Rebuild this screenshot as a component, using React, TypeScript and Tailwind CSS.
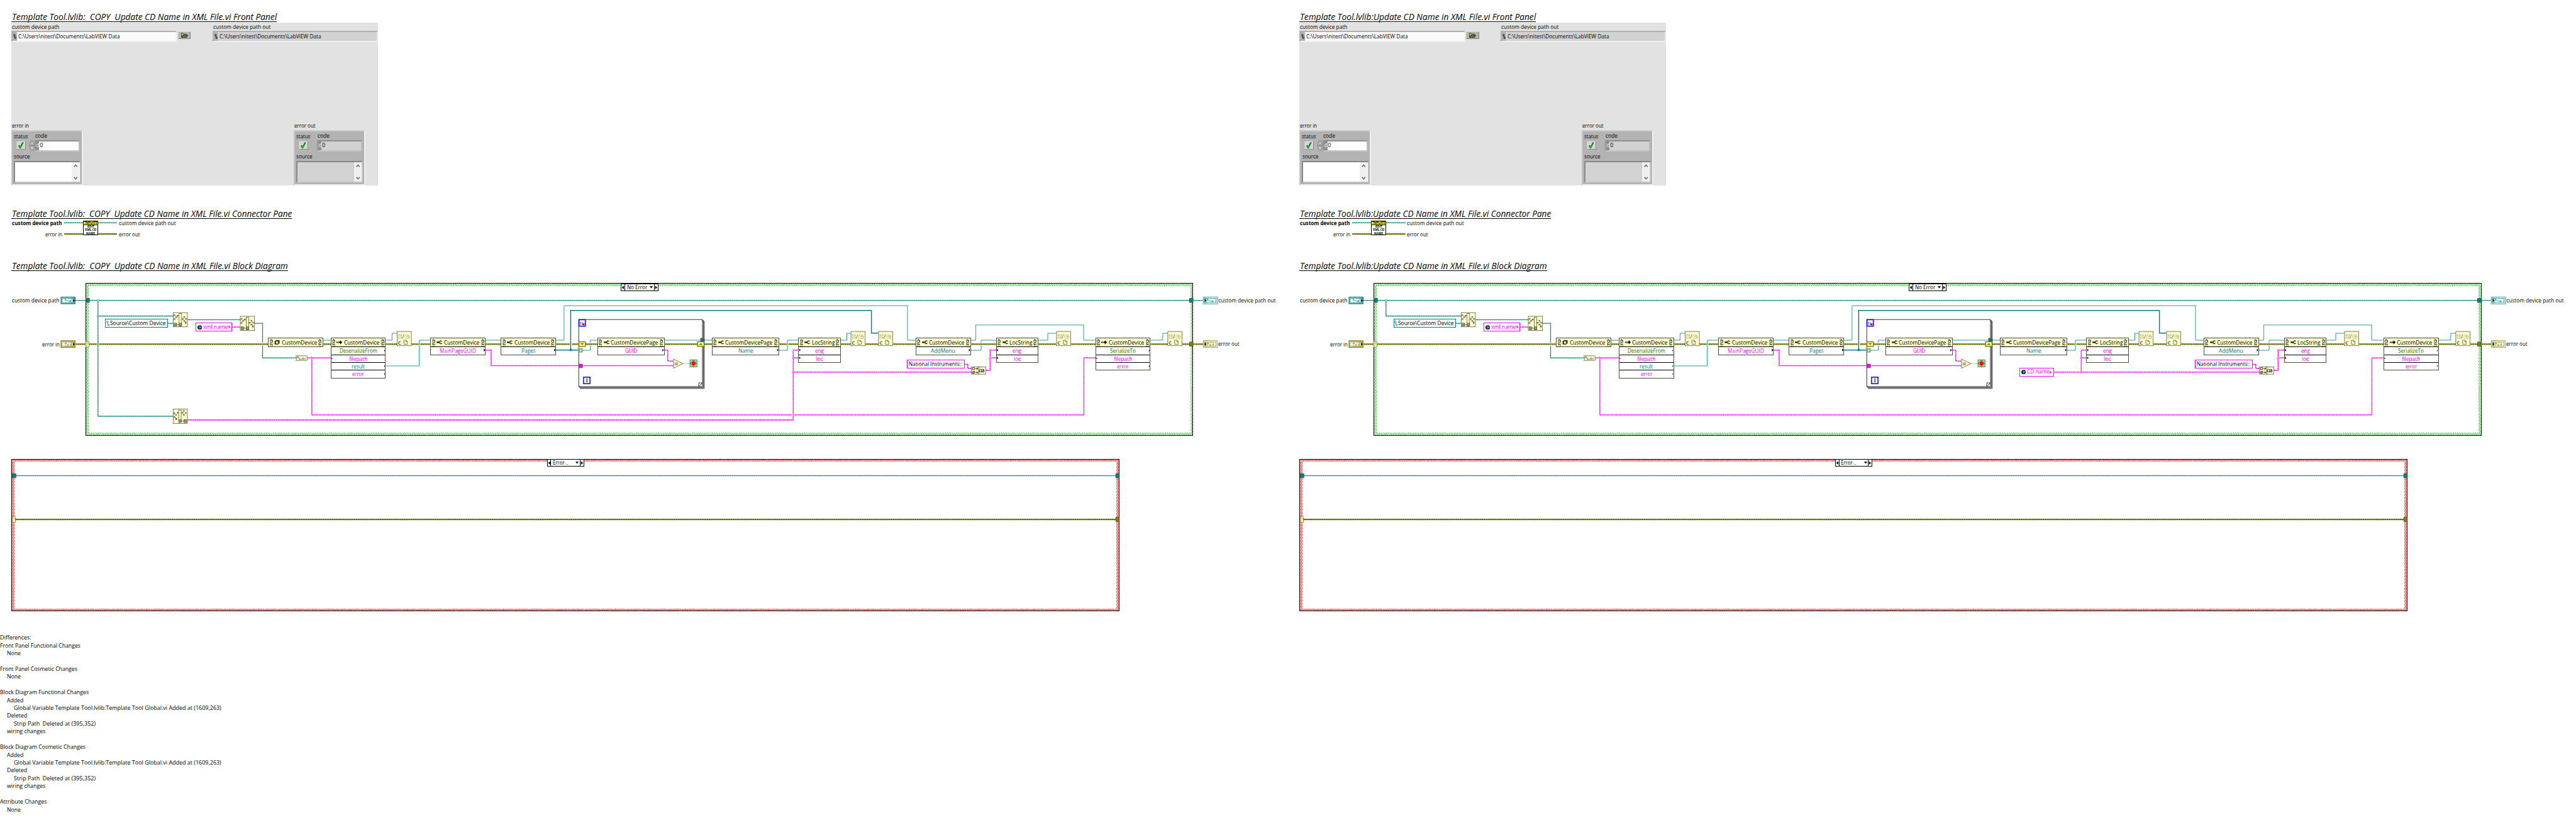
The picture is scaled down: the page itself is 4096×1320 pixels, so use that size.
import React, { useLayoutEffect, useRef } from "react";

const TEAL = "#008080";
const PINK = "#ff00ff";
const OLIVE = "#808000";
const CREAM = "#ffffcc";
const EDGE = "#4d4d3d";

/* Text squeezed or stretched horizontally to an exact width. */
function Fit({ w, className = "", children }: { w: number; className?: string; children: string }) {
  const outer = useRef<HTMLSpanElement>(null);
  const inner = useRef<HTMLSpanElement>(null);
  useLayoutEffect(() => {
    if (!outer.current || !inner.current) return;
    inner.current.style.transform = "none";
    const a = outer.current.getBoundingClientRect().width;
    const b = inner.current.getBoundingClientRect().width;
    if (b > 0) inner.current.style.transform = `scaleX(${a / b})`;
  }, [w, children]);
  return (
    <span ref={outer} className={`block shrink-0 ${className}`} style={{ width: w }}>
      <span ref={inner} className="inline-block origin-left whitespace-pre">
        {children}
      </span>
    </span>
  );
}

function Label({ x, y, w, className = "", children }: { x: number; y: number; w: number; className?: string; children: string }) {
  return (
    <div className={`absolute h-4 text-[13px] leading-4 ${className}`} style={{ left: x, top: y - 8 }}>
      <Fit w={w}>{children}</Fit>
    </div>
  );
}

function Heading({ w, className, children }: { w: number; className: string; children: string }) {
  return (
    <h2 className={`ml-[25px] h-[19px] w-max border-b-2 border-black pl-px text-[19.500px] italic leading-[17px] ${className}`}>
      <Fit w={w}>{children}</Fit>
    </h2>
  );
}

/* ---------- Front panel ---------- */

function PathField({ out = false }: { out?: boolean }) {
  return (
    <div className={`flex h-[25px] w-[360px] border-[3px] border-t-[#b0b0b0] border-l-[#b0b0b0] border-b-[#f0f0f0] ${out ? "border-r-[#e8e8e8]" : "border-r-[#f0f0f0]"}`}>
      <div className="flex w-[9px] items-center justify-center bg-[#b4b4b4]">
        <svg width="7" height="11" viewBox="0 0 7 11" fill="none" stroke="#000" strokeWidth="1">
          <path d="M1 1h3v3H1zM3 4v5M3.500 6.500h2.500v3.500H3.500z" />
        </svg>
      </div>
      <div className={`flex flex-1 items-center pl-[3px] text-[13px] leading-4 ${out ? "bg-[#d2d2d2]" : "bg-[#fafafa]"}`}>
        <Fit w={221}>{"C:\\Users\\nitest\\Documents\\LabVIEW Data"}</Fit>
      </div>
    </div>
  );
}

function ErrorCluster({ out = false }: { out?: boolean }) {
  const fill = out ? "bg-[#d2d2d2]" : "bg-white";
  return (
    <div className="h-[121px] w-[155px] border-[3px] border-t-[#cbcbcb] border-l-[#c4c4c4] border-r-[#efefef] border-b-[#efefef] bg-[#b3b3b3] pl-[2px] pt-[3px] text-[13px] leading-4">
      <div className="flex h-4">
        <Fit w={31}>status</Fit>
        <Fit w={26} className="ml-4 -mt-px">code</Fit>
      </div>
      <div className="flex h-[25px]">
        <div className="ml-[6px] mt-px flex h-5 w-5 items-center justify-center border-2 border-b-[#8c8c8c] border-r-[#8c8c8c] border-l-[#c8c8c8] border-t-[#c8c8c8] bg-[#d6d6d6]">
          <svg width="12" height="14" viewBox="0 0 12 14">
            <path d="M1 8l2-1 2 2 4-8h2l-4 8-2 4H3z" fill="#00ee00" stroke="#003300" strokeWidth="1" />
          </svg>
        </div>
        <div className="w-[9px]" />
        {out ? (
          <div className="w-[11px]" />
        ) : (
          <svg width="11" height="24" viewBox="0 0 11 24">
            <ellipse cx="5.500" cy="12" rx="5.300" ry="11.500" fill="#a8a8a8" stroke="#7a7a7a" strokeWidth="0.800" />
            <path d="M0 12h11" stroke="#6e6e6e" />
            <path d="M3.500 8.500L5.500 5l2 3.500M3.500 15.500h4L5.500 19z" fill="none" stroke="#f4f4f4" />
          </svg>
        )}
        <div className="flex h-[25px] w-[98px] border-[3px] border-t-[#8f8f8f] border-l-[#9a9a9a] border-r-[#bdbdbd] border-b-[#c4c4c4]">
          <div className="w-[7px] bg-[#8e8e8e] text-right text-[12px] leading-[18px] text-[#eeeeee]">d</div>
          <div className={`flex-1 pl-px text-[12px] leading-[18px] ${fill}`}>0</div>
        </div>
      </div>
      <Fit w={35} className="mt-[2px] pl-px">source</Fit>
      <div className="mt-[2px] flex h-[49px] w-[146px] border-[4px] border-t-[#868686] border-l-[#8a8a8a] border-r-[#bdbdbd] border-b-[#c0c0c0]">
        <div className={`flex-1 ${fill}`} />
        <div className="flex w-4 flex-col items-center justify-between bg-[#f0f0f0] py-1">
          <svg width="9" height="7" viewBox="0 0 9 7" fill="none" stroke="#606060" strokeWidth="2"><path d="M1 6l3.500-4L8 6" /></svg>
          <svg width="9" height="7" viewBox="0 0 9 7" fill="none" stroke="#606060" strokeWidth="2"><path d="M1 1l3.500 4L8 1" /></svg>
        </div>
        <div className={`w-px ${fill}`} />
      </div>
    </div>
  );
}

function FrontPanel() {
  return (
    <section className="ml-[25px] mt-px flex h-[355px] w-[797px] flex-col justify-between overflow-hidden bg-[#e2e2e2] text-[13px] leading-4">
      <div className="flex pt-px">
        <div className="w-[362px]">
          <Fit w={103} className="ml-[1.500px] mb-px">custom device path</Fit>
          <PathField />
        </div>
        <div className="mt-[18px] flex h-[17px] w-7 items-center justify-center border-2 border-t-[#d0d0d0] border-l-[#c8c8c8] border-r-[#808080] border-b-[#808080] bg-[#b4b4b4]">
          <svg width="15" height="11" viewBox="0 0 15 11">
            <path d="M1 10V1h3l1 2h6v2" fill="#ffff33" stroke="#000" />
            <path d="M1 10.500L3.500 5H14l-2 5.500z" fill="#6b6b4a" stroke="#000" />
          </svg>
        </div>
        <div className="ml-[47px] w-[360px] shrink-0">
          <Fit w={125} className="ml-px mb-px">custom device path out</Fit>
          <PathField out />
        </div>
      </div>
      <div className="flex items-end justify-between pr-[28px]">
        <div>
          <Fit w={37} className="ml-[1.500px] mb-[2px]">error in</Fit>
          <ErrorCluster />
        </div>
        <div>
          <Fit w={46} className="ml-px mb-[2px]">error out</Fit>
          <ErrorCluster out />
        </div>
      </div>
    </section>
  );
}

/* ---------- Wires ---------- */

function Zig({ d, c }: { d: string; c: string }) {
  return (
    <g fill="none" stroke={c}>
      <path d={d} strokeWidth="1.100" />
      <path d={d} strokeWidth="2.100" strokeDasharray="2 2" />
    </g>
  );
}

function Thin({ d }: { d: string }) {
  return <path d={d} fill="none" stroke={TEAL} strokeWidth="1.100" />;
}

function Err({ d }: { d: string }) {
  return (
    <g fill="none">
      <path d={d} stroke={OLIVE} strokeWidth="3" />
      <path d={d} stroke="#000" strokeWidth="1.200" />
      <path d={d} stroke="#ffff00" strokeWidth="1.200" strokeDasharray="2 2" />
    </g>
  );
}

function Dot({ x, y, c }: { x: number; y: number; c: string }) {
  return <path d={`M${x - 2.3} ${y}L${x} ${y - 2.3}L${x + 2.3} ${y}L${x} ${y + 2.3}z`} fill="#fff" stroke={c} strokeWidth="1.200" />;
}

/* ---------- Connector pane ---------- */

function ConnectorPane() {
  return (
    <section className="ml-[26px] mt-[4px] flex h-[34px] text-[13px] leading-4">
      <div className="flex w-[113px] flex-col gap-2">
        <Fit w={109} className="-mt-[2px] font-bold">custom device path</Fit>
        <Fit w={37} className="ml-[72px]">error in</Fit>
      </div>
      <div className="flex h-8">
        <svg width="42" height="32" viewBox="0 0 42 32"><Zig d="M0 4.500H42" c={TEAL} /><Err d="M0 29H42" /></svg>
        <div className="flex h-8 w-8 flex-col border border-black bg-white text-center text-[7px] font-bold leading-[7px]">
          <div className="flex h-[8.500px] justify-center border-b border-black bg-[#ffff00]"><Fit w={28}>TMPLATE</Fit></div>
          <div className="flex flex-col items-center gap-[0.200px]">
            <Fit w={15}>EDIT</Fit>
            <Fit w={25}>XML CD</Fit>
            <Fit w={19}>NAME</Fit>
          </div>
        </div>
        <svg width="42" height="32" viewBox="0 0 42 32"><Zig d="M0 4.500H42" c={TEAL} /><Err d="M0 29H42" /></svg>
      </div>
      <div className="ml-[4px] flex flex-col gap-2">
        <Fit w={124} className="-mt-[2px]">custom device path out</Fit>
        <Fit w={46}>error out</Fit>
      </div>
    </section>
  );
}

/* ---------- Block diagram nodes ---------- */

type Row = { t: string; w: number; c: string };
type NodeSpec = { x: number; w: number; title: string; tw: number; icon: "cube" | "invoke" | "prop"; rows: Row[] };

const green = "text-[#008000]";
const pink = "text-[#ff00ff]";
const teal = "text-[#008080]";

const nodes: NodeSpec[] = [
  { x: 583, w: 120, title: "CustomDevice", tw: 77, icon: "cube", rows: [] },
  {
    x: 719, w: 120, title: "CustomDevice", tw: 77, icon: "invoke",
    rows: [
      { t: "DeserializeFrom", w: 82, c: green },
      { t: "filepath", w: 40, c: pink },
      { t: "result", w: 29, c: teal },
      { t: "error", w: 25, c: pink },
    ],
  },
  { x: 936, w: 120, title: "CustomDevice", tw: 77, icon: "prop", rows: [{ t: "MainPageGUID", w: 79, c: pink }] },
  { x: 1089, w: 120, title: "CustomDevice", tw: 77, icon: "prop", rows: [{ t: "Pages", w: 31, c: teal }] },
  { x: 1299, w: 146, title: "CustomDevicePage", tw: 103, icon: "prop", rows: [{ t: "GUID", w: 26, c: pink }] },
  { x: 1548, w: 146, title: "CustomDevicePage", tw: 103, icon: "prop", rows: [{ t: "Name", w: 32, c: teal }] },
  { x: 1736, w: 92, title: "LocString", tw: 50, icon: "prop", rows: [{ t: "eng", w: 19, c: pink }, { t: "loc", w: 16, c: pink }] },
  { x: 1991, w: 120, title: "CustomDevice", tw: 77, icon: "prop", rows: [{ t: "AddMenu", w: 53, c: teal }] },
  { x: 2166, w: 92, title: "LocString", tw: 50, icon: "prop", rows: [{ t: "eng", w: 19, c: pink }, { t: "loc", w: 16, c: pink }] },
  {
    x: 2382, w: 120, title: "CustomDevice", tw: 77, icon: "invoke",
    rows: [
      { t: "SerializeTo", w: 56, c: green },
      { t: "filepath", w: 40, c: pink },
      { t: "error", w: 25, c: pink },
    ],
  },
];

function RefMarks() {
  return (
    <svg width="7" height="17" viewBox="0 0 7 17" className="shrink-0">
      <path d="M1.500 1.500H4L6 3.500V7.500H1.500zM4 1.500V4H6" fill="none" stroke="#000" />
      <path d="M0.500 11.500V10.500H3V12.500H2V14M5.500 10V14.200" fill="none" stroke="#000" strokeWidth="1.200" />
      <path d="M1.400 15H2.600V16.200H1.400zM4.900 15H6.100V16.200H4.900z" />
    </svg>
  );
}

function NodeIcon({ kind }: { kind: NodeSpec["icon"] }) {
  return (
    <svg width="13" height="12" viewBox="0 0 13 12" className="shrink-0">
      {kind === "cube" && (
        <>
          <path d="M1 3.500L4 1.500H11.500V8L9 10.500H1z" fill="#000" />
          <path d="M3.500 4.500H8V9H3.500z" fill={CREAM} />
          <path d="M2 3.500H9L11 2M9 4V10" fill="none" stroke={CREAM} strokeWidth="0.700" />
        </>
      )}
      {kind === "invoke" && <path d="M0 4.500H1.500V7.500H0zM2.500 4.500H4V7.500H2.500zM5 4.500H8V1.500L12.500 6L8 10.500V7.500H5z" fill="#000" />}
      {kind === "prop" && (
        <>
          <path d="M0.500 4.500H6V7.500H0.500z" fill="#000" />
          <path d="M12 3.500H10.500L9 2.500L7 4V8L9 9.500L10.500 8.500H12" fill="none" stroke="#000" strokeWidth="1.500" />
        </>
      )}
    </svg>
  );
}

function DiagramNode({ n }: { n: NodeSpec }) {
  return (
    <div className="absolute top-[135px] border border-[#4d4d3d] bg-white text-[13px]" style={{ left: n.x, width: n.w }}>
      <div className="flex h-[17.500px] items-center bg-[#ffffcc] pl-[2px] leading-[17px]">
        <RefMarks />
        <div className="ml-[3px] flex w-[16px]"><NodeIcon kind={n.icon} /></div>
        <Fit w={n.tw}>{n.title}</Fit>
        <div className="ml-auto mr-[2px] flex"><RefMarks /></div>
      </div>
      {n.rows.map((r, i) => (
        <div key={i} className={`flex h-[17px] justify-center border-t border-black leading-4 ${r.c}`}>
          <Fit w={r.w}>{r.t}</Fit>
        </div>
      ))}
    </div>
  );
}

/* ---------- Diagram glyphs ---------- */

function BuildPath({ x, y, strip = false }: { x: number; y: number; strip?: boolean }) {
  return (
    <g transform={`translate(${x} ${y})`} fill="none" stroke={EDGE}>
      <rect x="0.500" y="0.500" width="31" height="31" fill={CREAM} />
      <rect x={strip ? 12.5 : 13.5} y="2.500" width="5.500" height={strip ? 21 : 27} fill={CREAM} />
      {strip ? (
        <>
          <path d="M2 8.500h2.500v2.500H2zM6 12h2v2H6zM2 16.500h2.500v2.500H2zM4.500 17L7 20.500M22.500 3h2.500v2.500h-2.500zM26.500 7.500h2.500v2.500h-2.500zM22.500 11.500h2.500v2.500h-2.500z" />
          <path d="M6 20.500h2.500v2.500H6z" fill={EDGE} />
          <path d="M8 8.500h4M18.500 8.500h4" />
          <path d="M9.500 6l3 2.500-3 2.500zM20 6l3 2.500-3 2.500z" fill={EDGE} stroke="none" />
          <rect x="12.500" y="23.500" width="6" height="6" fill="#99997a" />
          <rect x="24" y="23.500" width="6" height="6" fill="#99997a" />
          <path d="M18.500 26.500h5" />
        </>
      ) : (
        <>
          <path d="M2 5h2.500v2.500H2zM6 9h2.500v2.500H6zM2 13.500h2.500V16H2zM4.500 13L6 11.500" />
          <path d="M8 7.500h4M19 14.500h4" />
          <path d="M9.500 5l3 2.500-3 2.500zM20.500 12l3 2.500-3 2.500z" fill={EDGE} stroke="none" />
          <path d="M23.500 9h2.500v2.500h-2.500zM27 13h2.500v2.500H27zM23.500 17.500h2.500V20h-2.500zM26 19l2 2" />
          <path d="M27 21.500h2V24h-2z" fill={EDGE} />
          <rect x="2.500" y="23.500" width="6" height="6" fill="#99997a" />
          <rect x="13.500" y="23.500" width="5" height="6" fill="#99997a" />
          <path d="M8.500 26.500h5" />
        </>
      )}
    </g>
  );
}

function CloseRef({ x }: { x: number }) {
  return (
    <g transform={`translate(${x} 720)`}>
      <rect x="0.500" y="0.500" width="31" height="31" fill={CREAM} stroke={EDGE} />
      <path d="M3 7.500h8M3 15.500h8M3.500 8v7M10.500 8v7M5 10h4M6 13h4M18 8.500h8M17.500 10v4M19 15.500h9M20 12h8M22 10h6M24 14h5" stroke={EDGE} strokeWidth="0.800" strokeDasharray="1.300 1" fill="none" />
      <path d="M12 16L15.500 7" stroke={EDGE} fill="none" />
      <text x="2.500" y="29" fontSize="10" fontWeight="700" fill={EDGE}>C</text>
      <path d="M15.500 19.500H20L23 22.500V28.500H15.500zM20 19.500V22.500H23" stroke={EDGE} fill={CREAM} />
    </g>
  );
}

function Terminal({ x, y, c, out = false, err = false }: { x: number; y: number; c: string; out?: boolean; err?: boolean }) {
  const bw = out ? 1 : 2;
  return (
    <g transform={`translate(${x} ${y})`}>
      <rect x={bw / 2} y={bw / 2} width={32 - bw} height={16 - bw} fill="#fff" stroke={c} strokeWidth={bw} />
      <rect x="3.500" y="3.500" width="25" height="9" fill="#fff" stroke={c} />
      {err ? (
        <path d="M9 5.500h4v2H9zM16 5.500h3M21 5.500h2v2M9 10h2M14 9.500h4v1h-4zM21 8.500h2v2h-2z" fill="none" stroke={c} />
      ) : (
        <path d="M9 5.500h2v2H9zM11 7.500l8 2.500M19.500 8.500h2.500v2h-2.500z" fill="none" stroke={c} />
      )}
      <rect x={out ? 1 : 22} y="2" width={out ? 8 : 9} height="12" fill={c} opacity="0.300" />
      <path d={out ? "M4 4.500L7.500 8L4 11.500z" : "M27 4.500L30.500 8L27 11.500z"} />
    </g>
  );
}

function Arrows({ list }: { list: number[][] }) {
  return <>{list.map(([x, y, s], i) => <path key={i} d={`M${x} ${y - s}L${x + s} ${y}L${x} ${y + s}z`} fill="#000" />)}</>;
}

function Globe({ x, y }: { x: number; y: number }) {
  return (
    <g>
      <circle cx={x} cy={y} r="4.800" fill="#000" />
      <path d={`M${x - 1} ${y - 3.5}l3.500 1.500-1 3 -1.500 3.500-1-2.500-1-3zM${x + 2} ${y - 1}l2 0-1 3.500z`} fill="#22c0f0" />
    </g>
  );
}

function Junction({ c, x, y }: { c: string; x: number; y: number }) {
  return <rect x={x + 0.5} y={y + 0.5} width="8" height="9" fill={c} stroke={EDGE} />;
}

function CaseInput({ x, y }: { x: number; y: number }) {
  return (
    <g>
      <rect x={x + 0.5} y={y + 0.5} width="7" height="12" fill={CREAM} stroke={OLIVE} />
      <text x={x + 4} y={y + 10} fontSize="10" fill={OLIVE} textAnchor="middle">?</text>
    </g>
  );
}

/* Hatched case structure frame with its selector tab. */
function CaseFrame({ red = false, label, labelW, className, children }: { red?: boolean; label: string; labelW: number; className: string; children?: React.ReactNode }) {
  const hatch = red
    ? "bg-[repeating-linear-gradient(120deg,#ff6a6a_0px,#ff6a6a_1.900px,#ffc4c4_1.900px,#ffc4c4_3.400px)]"
    : "bg-[repeating-linear-gradient(120deg,#b3ffb3_0px,#b3ffb3_2.400px,#7aa67a_2.400px,#7aa67a_3.400px)]";
  return (
    <div className={`h-[332px] w-[2409px] border border-black p-[5px] ${hatch} ${className}`}>
      <div className="relative h-full w-full bg-white">
        <div className="absolute left-[1158px] -top-[6px] flex h-[17px] w-[81px] border border-black bg-white text-[13px] leading-[15px]">
          <div className="flex w-2 items-center border-r border-black">
            <svg width="7" height="9" viewBox="0 0 7 9"><path d="M6 0.500V8.500L1 4.500z" /></svg>
          </div>
          <div className="flex flex-1 justify-between pl-[4px] pr-[2px]">
            <Fit w={labelW}>{label}</Fit>
            <svg width="7" height="15" viewBox="0 0 7 15"><path d="M0 4.500H7L3.500 9z" /></svg>
          </div>
          <div className="flex w-2 items-center border-l border-black">
            <svg width="7" height="9" viewBox="0 0 7 9"><path d="M1 0.500V8.500L6 4.500z" /></svg>
          </div>
        </div>
        {children}
      </div>
    </div>
  );
}

function Wires({ copy }: { copy: boolean }) {
  return (
    <svg width="2801" height="398" viewBox="0 600 2801 398" className="absolute left-0 top-0">
      <g>
        {/* loop structure */}
        <g fill="none" stroke="#000" strokeWidth="1.100">
          <rect x="1258.500" y="694.500" width="269" height="146" />
          <path d="M1529.500 696.500V842.500H1260.500M1531.500 698.500V844.500H1262.500M1527.500 696.500h2M1529.500 698.500h2M1260.500 840.500v2M1262.500 842.500v2" />
          <path d="M1519.500 840.500V832.500H1527.500z" fill="#fff" />
        </g>

        {/* path wires */}
        <Zig c={TEAL} d="M164 653H2616" />
        <Zig c={TEAL} d={copy ? "M213 653V905H376" : "M213 653V687"} />
        <Zig c={TEAL} d="M213 687H376" />
        <Zig c={TEAL} d="M365 703H376" />
        <Zig c={TEAL} d="M408 695H522" />
        <Zig c={TEAL} d="M554 703H571V745M571 752V778H645" />
        <Dot x={213} y={653} c={TEAL} />
        {copy && <Dot x={213} y={687} c={TEAL} />}

        {/* string wires */}
        <Zig c={PINK} d="M504 711H522" />
        <Zig c={PINK} d="M668 778H719" />
        <Zig c={PINK} d={copy ? "M678 778V902H1722M1728 902H2357V778H2382" : "M678 778V902H2357V778H2382"} />
        <Dot x={678} y={778} c={PINK} />
        <Zig c={PINK} d="M1056 761H1068V795H1464" />
        <Zig c={PINK} d="M1445 761H1452V785H1464" />
        {copy ? <Zig c={PINK} d="M408 913H1725V761H1736" /> : <Zig c={PINK} d="M1725 809V761H1736" />}
        <Zig c={PINK} d="M1725 778H1736" />
        <Zig c={PINK} d={copy ? "M1725 809H2112" : "M1666 809H2112"} />
        <Dot x={1725} y={778} c={PINK} />
        <Dot x={1725} y={809} c={PINK} />
        <Zig c={PINK} d="M2098 792H2104.500V801H2112" />
        <Zig c={PINK} d="M2144 805H2153V761H2166M2153 778H2166" />
        <Dot x={2153} y={778} c={PINK} />

        {/* reference wires */}
        <Thin d="M703 739.500H719M839 739.500H852.500V724.500H863M839 795.500H911.500V739.500H936M1056 739.500H1089" />
        <Thin d="M1209 739.500H1226.500V664.500H1973.500V739.500H1991" />
        <Thin d="M1267 761.500H1283.500V751M1283.500 745V739.500H1299M1445 739.500H1548" />
        <Thin d="M1694 761.500H1712.500V739.500H1736M1828 739.500H1841.500V724.500H1850" />
        <Thin d="M2111 739.500H2122V706.500H2356.500V739.500H2382" />
        <Thin d="M2111 761.500H2133.500V751M2133.500 745V739.500H2166M2258 739.500H2278.500V724.500H2297M2502 739.500H2528.500V724.500H2539" />
        <path d="M1209 761H1258M1241 761V675H1895V724H1910" fill="none" stroke={TEAL} strokeWidth="2" />
        <circle cx="1241" cy="761" r="2.600" fill={TEAL} />

        {/* error wires */}
        <Err d={copy ? "M164 748.300H211M215 748.300H583" : "M164 748.300H583"} />
        <Err d="M703 748.300H719M839 748.300H863M895 748.300H910M913.500 748.300H936M1056 748.300H1089" />
        <Err d="M1209 748.300H1239M1243.500 748.300H1299M1445 748.300H1548M1694 748.300H1711M1714.500 748.300H1736" />
        <Err d="M1828 748.300H1850M1882 748.300H1910M1942 748.300H1991M2111 748.300H2166" />
        <Err d="M2258 748.300H2297M2329 748.300H2382M2502 748.300H2539M2571 748.300H2616" />

        {/* terminals and tunnels */}
        <Terminal x={132} y={645} c={TEAL} />
        <Terminal x={132} y={740} c={OLIVE} err />
        <Terminal x={2616} y={645} c={TEAL} out />
        <Terminal x={2616} y={740} c={OLIVE} out err />
        <Junction c={TEAL} x={186} y={648} />
        <Junction c={TEAL} x={2586} y={648} />
        <Junction c={OLIVE} x={2586} y={743} />
        <CaseInput x={186} y={742} />

        {/* function glyphs */}
        <BuildPath x={376} y={679} />
        <BuildPath x={522} y={687} />
        {copy && <BuildPath x={376} y={889} strip />}
        <CloseRef x={863} />
        <CloseRef x={1850} />
        <CloseRef x={1910} />
        <CloseRef x={2297} />
        <CloseRef x={2539} />

        <path d="M643 773.500H667L668.500 775V782L667 783.500H643L645 781V776z" fill={CREAM} stroke={EDGE} />
        <path d="M647 775.500h2v2h-2zM649 778l2 2M651 779.500h2v2h-2z" fill="none" stroke={EDGE} />
        <text x="655" y="782" fontSize="7" fill={EDGE} textLength="11">abc</text>

        {/* loop terminals */}
        <rect x="1259" y="695" width="14" height="14" fill={CREAM} stroke="#0000ff" strokeWidth="2" />
        <text x="1260.500" y="706" fontSize="10" fill="#0000ff">N</text>
        <circle cx="1269" cy="705" r="2.400" fill="#ff0000" />
        <rect x="1269" y="820" width="14" height="14" fill={CREAM} stroke="#0000ff" strokeWidth="2" />
        <text x="1276" y="831.500" fontSize="12" fontWeight="700" fill="#0000ff" textAnchor="middle">i</text>
        <rect x="1259" y="743" width="14" height="10" fill={CREAM} stroke={OLIVE} strokeWidth="2" />
        <path d="M1261.500 746H1270.500L1266 750.500z" fill={OLIVE} />
        <rect x="1517" y="743" width="14" height="10" fill={CREAM} stroke={OLIVE} strokeWidth="2" />
        <path d="M1519.500 750H1528.500L1524 745.500z" fill={OLIVE} />
        <rect x="1523.500" y="735.500" width="8" height="6" fill={TEAL} stroke={EDGE} />
        <rect x="1258.500" y="757.500" width="8" height="8" fill={CREAM} stroke={EDGE} />
        <path d="M1262 759.500h-1.500v4h1.500M1263.500 759.500h1.500v4h-1.500" fill="none" stroke={TEAL} />
        <rect x="1258.500" y="791.500" width="8" height="8" fill={PINK} stroke={EDGE} />
        <path d="M1464.500 780.500L1485 790.500L1464.500 800.500z" fill={CREAM} stroke={EDGE} />
        <path d="M1467 789h7M1467 792.500h7" stroke={EDGE} strokeWidth="1.500" />
        <path d="M1486 790.500H1500" stroke="#008000" strokeDasharray="1 1" />
        <rect x="1500.500" y="782.500" width="15" height="15" fill={CREAM} stroke="#008000" strokeWidth="1.300" />
        <path d="M1505.500 784.500h5l3 3v5l-3 3h-5l-3-3v-5z" fill="#fff" stroke="#000" />
        <circle cx="1508" cy="790" r="4.200" fill="#ff0000" />

        {/* concatenate strings */}
        <rect x="2112.500" y="797.500" width="31" height="16" fill={CREAM} stroke={EDGE} />
        <path d="M2128.500 797V814" stroke="#000" />
        <path d="M2114.500 799.500h5v4h-5zM2114.500 807.500h5v4h-5zM2114.500 811.500l5-4M2130.500 803.500h9v5h-9zM2134.500 803.500v5l5-5v5M2121 801.500h4M2121 809.500h4" fill="none" stroke="#000" />
        <path d="M2124 799.500l3 2-3 2zM2124 807.500l3 2-3 2z" />

        <Arrows
          list={[
            [835.5, 762, 2], [835.5, 796, 2], [835.5, 813, 2], [721.5, 779, 2],
            [1052, 761, 3], [1205, 761, 3], [1440.5, 761, 3], [1690, 761, 3],
            [1738, 761, 3], [1738, 778, 3], [2107, 761, 3], [2168, 761, 3], [2168, 778, 3],
            [2498.5, 762, 2], [2384.5, 779, 2], [2498.5, 796, 2],
          ]}
        />
      </g>
    </svg>
  );
}

function GlobalBox({ x, y, w, tw, children }: { x: number; y: number; w: number; tw: number; children: string }) {
  return (
    <div className="absolute flex h-[19px] items-center border-2 border-[#ff00ff] bg-white pl-[3px] text-[13px] leading-[15px] text-[#ff00ff]" style={{ left: x, top: y - 600, width: w }}>
      <svg width="10" height="10" viewBox="0 0 10 10" className="mr-[2px] shrink-0"><Globe x={5} y={5} /></svg>
      <Fit w={tw}>{children}</Fit>
      <svg width="5" height="8" viewBox="0 0 5 8" className="ml-px shrink-0"><path d="M0.500 0.500V7.500L4.500 4z" fill={PINK} /></svg>
    </div>
  );
}

function BlockDiagram({ copy }: { copy: boolean }) {
  return (
    <section className="relative mt-[10px] h-[398px] w-full">
      <div className="pl-[186px] pt-[16px]">
        <CaseFrame label="No Error" labelW={44} className="" />
      </div>
      {nodes.map((n) => <DiagramNode key={n.x} n={n} />)}
      <div className="absolute left-[229px] top-[94px] flex h-[19px] w-[136px] items-center border-2 border-[#008080] bg-white pl-px text-[13px] leading-[15px]">
        <svg width="7" height="12" viewBox="0 0 7 12" className="mr-px shrink-0" fill="none" stroke={TEAL}>
          <path d="M1 1h3v3H1zM3.500 4v4M3.500 8h3v3h-3z" />
        </svg>
        <Fit w={121}>{"Source\\Custom Device"}</Fit>
      </div>
      <GlobalBox x={425} y={702} w={79} tw={54}>xml name</GlobalBox>
      {!copy && <GlobalBox x={1590} y={800} w={76} tw={49}>CD name</GlobalBox>}
      <div className="absolute left-[1972px] top-[183px] flex h-[19px] w-[126px] items-center border-2 border-[#ff00ff] bg-white pl-[3px] text-[13px] leading-[15px]">
        <Fit w={116}>National Instruments::</Fit>
      </div>
      <Wires copy={copy} />
      <Label x={26.5} y={54} w={103}>custom device path</Label>
      <Label x={92} y={149} w={38}>error in</Label>
      <Label x={2649.5} y={53} w={125}>custom device path out</Label>
      <Label x={2649.5} y={148} w={46}>error out</Label>
    </section>
  );
}

function ErrorCase() {
  return (
    <CaseFrame red label="Error .." labelW={34} className="ml-[25px]">
      <svg width="2409" height="110" viewBox="0 1022 2409 110" className="absolute -left-[6px] top-[18px] overflow-visible">
        <Zig c={TEAL} d="M6 1035H2402" />
        <Err d="M6 1130.300H2402" />
        <Junction c={TEAL} x={0} y={1030} />
        <Junction c={TEAL} x={2400} y={1030} />
        <Junction c={OLIVE} x={2400} y={1125} />
        <CaseInput x={0} y={1124} />
      </svg>
    </CaseFrame>
  );
}

function Report({ copy }: { copy: boolean }) {
  return (
    <div className="w-[2801px]">
      <Heading className="mt-[29px]" w={copy ? 576 : 513}>
        {copy ? "Template Tool.lvlib:  COPY  Update CD Name in XML File.vi Front Panel" : "Template Tool.lvlib:Update CD Name in XML File.vi Front Panel"}
      </Heading>
      <FrontPanel />
      <Heading className="mt-[53px]" w={copy ? 609 : 546}>
        {copy ? "Template Tool.lvlib:  COPY  Update CD Name in XML File.vi Connector Pane" : "Template Tool.lvlib:Update CD Name in XML File.vi Connector Pane"}
      </Heading>
      <ConnectorPane />
      <Heading className="mt-[57px]" w={copy ? 600 : 537}>
        {copy ? "Template Tool.lvlib:  COPY  Update CD Name in XML File.vi Block Diagram" : "Template Tool.lvlib:Update CD Name in XML File.vi Block Diagram"}
      </Heading>
      <BlockDiagram copy={copy} />
      <ErrorCase />
    </div>
  );
}

/* ---------- Difference list ---------- */

const added = "Global Variable Template Tool.lvlib:Template Tool Global.vi Added at (1609,263)";
const lines: [number, string, number][] = [
  [0, "Differences:", 68],
  [0, "Front Panel Functional Changes", 175],
  [15, "None", 30],
  [0, "", 0],
  [0, "Front Panel Cosmetic Changes", 168],
  [15, "None", 30],
  [0, "", 0],
  [0, "Block Diagram Functional Changes", 193],
  [15, "Added", 36],
  [30, added, 451],
  [15, "Deleted", 44],
  [30, "Strip Path  Deleted at (395,352)", 178],
  [15, "wiring changes", 84],
  [0, "", 0],
  [0, "Block Diagram Cosmetic Changes", 186],
  [15, "Added", 36],
  [30, added, 451],
  [15, "Deleted", 44],
  [30, "Strip Path  Deleted at (395,352)", 178],
  [15, "wiring changes", 84],
  [0, "", 0],
  [0, "Attribute Changes", 102],
  [15, "None", 30],
];

export default function App() {
  return (
    <main className="h-[1805px] w-[5602px] overflow-hidden bg-white text-black [font-family:'Open_Sans','Noto_Sans',sans-serif] [zoom:0.7312]">
      <div className="flex">
        <Report copy />
        <Report copy={false} />
      </div>
      <ul className="mt-[49px] text-[13px] leading-[17px]">
        {lines.map(([indent, text, w], i) => (
          <li key={i} className="h-[17px]" style={{ paddingLeft: indent }}>
            {text && <Fit w={w}>{text}</Fit>}
          </li>
        ))}
      </ul>
    </main>
  );
}
